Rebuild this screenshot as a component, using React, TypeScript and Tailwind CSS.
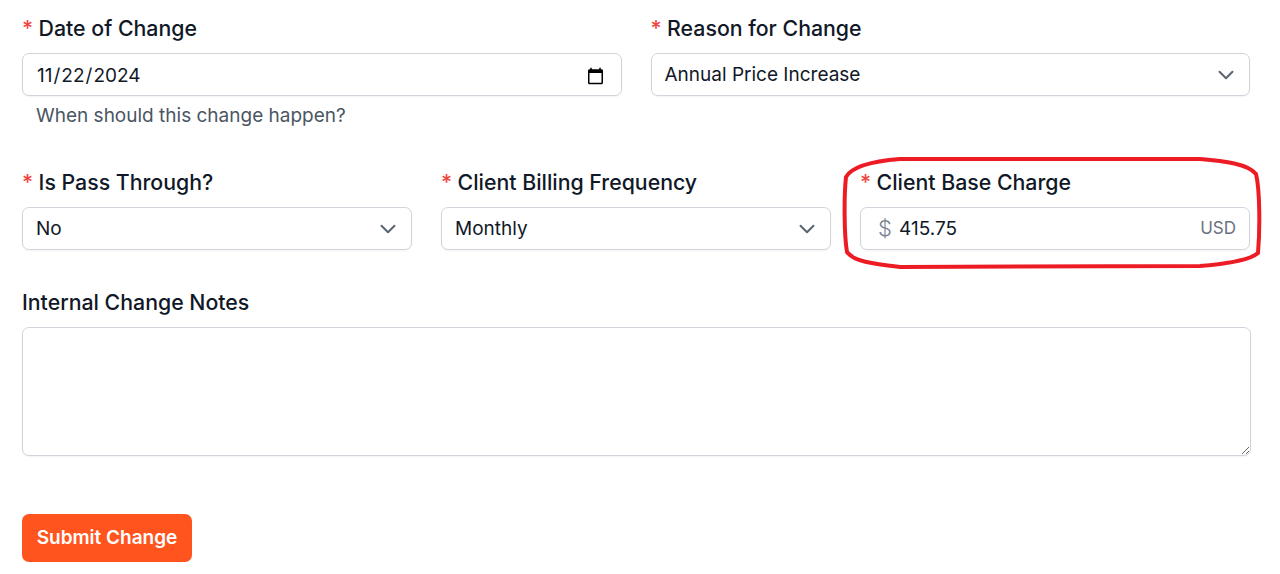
import React from "react"
import { ChevronDown } from "lucide-react"

function Label({ children, required = true }: { children: React.ReactNode; required?: boolean }) {
  return (
    <label className="block h-[30px] text-[21.3px] leading-[30px] font-medium text-[#111827]">
      {required && <span className="text-[#ef4444] mr-[5.5px]">*</span>}
      {children}
    </label>
  )
}

function SelectBox({ value }: { value: string }) {
  return (
    <div className="mt-[10px] h-[43px] flex items-center justify-between rounded-[7px] border border-[#d1d5db] bg-white pl-[13px] pr-[10px] text-[19px] text-[#111827] shadow-[0_1px_2px_rgba(0,0,0,0.05)]">
      <span className="pt-[2px]">{value}</span>
      <ChevronDown className="w-[26px] h-[26px] text-[#5b6472]" strokeWidth={1.85} />
    </div>
  )
}

export default function App() {
  return (
    <div className="relative w-[1280px] h-[574px] overflow-hidden bg-white pt-[13px] pl-[22px] pr-[29px] font-['Inter',sans-serif]">
      <div className="grid grid-cols-2 gap-x-[29px] pr-[1px]">
        <div>
          <Label>Date of Change</Label>
          <input
            type="date"
            defaultValue="2024-11-22"
            className="mt-[10px] block w-full h-[43px] rounded-[7px] border border-[#d1d5db] bg-white pl-[13px] pr-[14px] pt-[3px] text-[19px] text-[#111827] shadow-[0_1px_2px_rgba(0,0,0,0.05)]"
          />
          <p className="mt-[6px] pl-[14px] text-[19px] leading-[28px] text-[#4b5563]">When should this change happen?</p>
        </div>
        <div>
          <Label>Reason for Change</Label>
          <SelectBox value="Annual Price Increase" />
        </div>
      </div>

      <div className="mt-[37px] grid grid-cols-3 gap-x-[29px] pr-[1px]">
        <div>
          <Label>Is Pass Through?</Label>
          <SelectBox value="No" />
        </div>
        <div>
          <Label>Client Billing Frequency</Label>
          <SelectBox value="Monthly" />
        </div>
        <div>
          <Label>Client Base Charge</Label>
          <div className="mt-[10px] h-[43px] flex items-center rounded-[7px] border border-[#d1d5db] bg-white pl-[17px] pr-[13px] text-[19px] shadow-[0_1px_2px_rgba(0,0,0,0.05)]">
            <span className="w-[21px] text-[22px] font-light text-[#7b828e]">$</span>
            <span className="flex-1 pt-[2px] text-[#111827]">415.75</span>
            <span className="text-[17px] text-[#6b7280]">USD</span>
          </div>
        </div>
      </div>

      <div className="mt-[37px]">
        <Label required={false}>Internal Change Notes</Label>
        <textarea className="mt-[10px] block w-full h-[129px] rounded-[7px] border border-[#d1d5db] bg-white shadow-[0_1px_2px_rgba(0,0,0,0.05)]" />
      </div>

      <button className="mt-[58px] block h-[48px] w-[170px] rounded-[7px] bg-[#ff541d] text-[19px] font-semibold text-white">
        Submit Change
      </button>

      <svg className="absolute left-[840px] top-[150px] pointer-events-none" width="430" height="125" viewBox="0 0 430 125" fill="none">
        <path
          d="M60 9 L360 9 C385 11 408 14 416 24 C420 40 420 80 418 103 C410 110 385 114 360 116 L60 117 C35 114 14 112 7 102 C4 85 4 45 6 27 C12 16 35 11 60 9 Z"
          stroke="#ed1c24"
          strokeWidth="4"
        />
      </svg>
    </div>
  )
}
